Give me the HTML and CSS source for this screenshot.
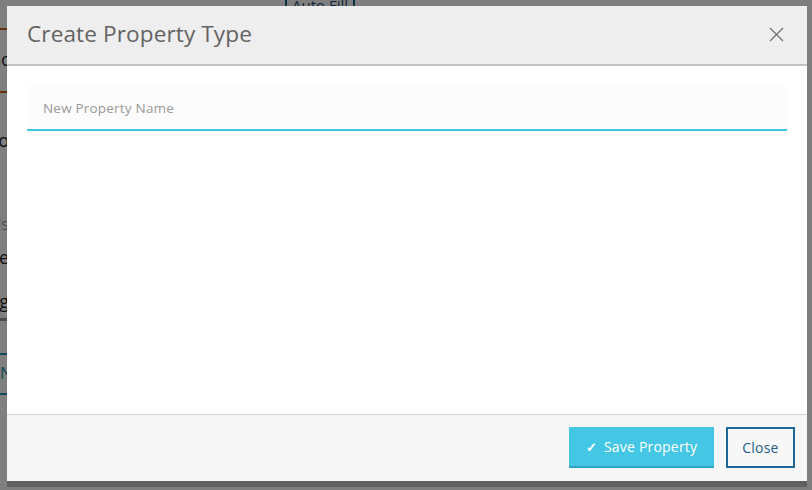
FILE: index.html
```html
<!DOCTYPE html>
<html>
<head>
<meta charset="utf-8">
<link rel="stylesheet" href="styles.css">
</head>
<body>
<div class="page">
  <div class="page-top"><span class="autofill">Auto Fill</span></div>
  <div class="side">
    <div class="rule orange r1"></div>
    <div class="frag f1">Spot</div>
    <div class="rule orange r2"></div>
    <div class="frag f2">Po</div>
    <div class="frag f3 light">Us</div>
    <div class="frag f4">De</div>
    <div class="frag f5">g</div>
    <div class="rule grey r3"></div>
    <div class="tealbox"><span>N</span></div>
  </div>
</div>
<div class="overlay"></div>
<div class="modal">
  <div class="modal-header">
    <h1 class="modal-title">Create Property Type</h1>
    <button class="x-btn" aria-label="Close">
      <svg width="15" height="15" viewBox="0 0 15 15"><path d="M1 1 L14 14 M14 1 L1 14" stroke="#6f6f6f" stroke-width="1.3" fill="none"/></svg>
    </button>
  </div>
  <div class="modal-body">
    <div class="field"><span class="placeholder">New Property Name</span></div>
  </div>
  <div class="modal-footer">
    <button class="btn btn-save"><span class="check">✓</span>Save Property</button>
    <button class="btn btn-close">Close</button>
  </div>
</div>
</body>
</html>
```
FILE: styles.css
```css
* { box-sizing: border-box; }
html, body { margin: 0; padding: 0; }
body {
  width: 812px; height: 490px; overflow: hidden; position: relative;
  background: #fff;
  font-family: "Open Sans", "Noto Sans", sans-serif;
}
.page { width: 812px; height: 490px; }
.page-top { height: 20px; display: flex; padding-left: 285px; }
.autofill {
  display: block; height: 24px; width: 70px; margin-top: -12px;
  border-left: 2px solid #1f5f8a; border-right: 2px solid #1f5f8a;
  color: #1f4f7a; font-size: 15px; text-align: center; line-height: 34px;
}
.side { position: relative; width: 40px; margin-left: -20px; }
.rule { height: 2px; width: 40px; }
.orange { background: #c8641a; }
.grey { background: #999; height: 3px; }
.r1 { margin-top: 8px; }
.frag { font-size: 18px; color: #222; text-align: right; width: 29px; line-height: 24px; }
.f1 { margin-top: 17px; }
.r2 { margin-top: 20px; }
.f2 { margin-top: 35px; }
.f3 { margin-top: 60px; color: #999; font-size: 16px; }
.f4 { margin-top: 9px; }
.f5 { margin-top: 20px; }
.r3 { margin-top: 5px; }
.tealbox {
  margin-top: 32px; height: 42px; border-top: 2px solid #1a8fa8; border-bottom: 2px solid #1a8fa8;
  color: #1a8fa8; font-size: 16px; padding-left: 20px; line-height: 36px; width: 40px;
}
.overlay { position: absolute; inset: 0; background: rgba(0,0,0,0.5); }
.modal {
  position: absolute; left: 7px; top: 6px; width: 800px; height: 475px;
  background: #fff; display: flex; flex-direction: column;
  box-shadow: 0 6px 0 rgba(0,0,0,0.25);
}
.modal-header {
  height: 60px; background: #eeeeee; border-bottom: 2px solid #c2c2c2;
  display: flex; align-items: center; justify-content: space-between;
  padding: 0 23px 0 20px;
}
.modal-title { margin: 0; font-size: 22.6px; font-weight: 400; color: #636363; letter-spacing: 0.1px; padding-bottom: 3px; }
.x-btn { border: 0; background: none; padding: 0; display: flex; margin-top: -1px; }
.modal-body { flex: 1; padding: 20px 20px 0 20px; }
.field {
  height: 45px; background: #fcfcfc; border-bottom: 2px solid #40c4e1;
  display: flex; align-items: center; padding-left: 16px;
}
.placeholder { color: #9a9a9a; font-size: 13.5px; padding-top: 1px; letter-spacing: 0.2px; }
.modal-footer {
  height: 67px; background: #f7f7f7; border-top: 1px solid #d2d2d2;
  display: flex; justify-content: flex-end; align-items: flex-start;
  padding: 12px 12px 0 0; gap: 12px;
}
.btn { height: 41px; font-family: inherit; font-size: 14px; cursor: pointer; letter-spacing: 0.2px; }
.btn-save {
  width: 145px; background: #43c7e4; color: #fff; border: 0; border-bottom: 2px solid #2ea6c2;
  display: flex; align-items: center; justify-content: center; padding: 0;
}
.check { font-size: 13px; font-weight: 700; margin-right: 7px; }
.btn-close {
  width: 69px; background: #f7f7f7; color: #1f5f8a; border: 2px solid #1f6796;
}
```
